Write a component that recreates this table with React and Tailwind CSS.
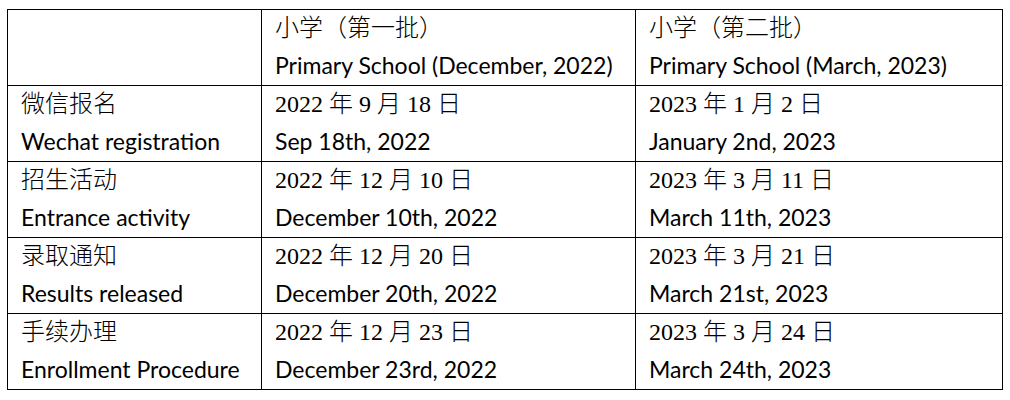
import React from 'react';

const zh = { fontFamily: '"Liberation Serif", "Noto Sans CJK SC", serif' };
const en = { fontFamily: 'Lato, "Liberation Sans", sans-serif' };

const rows = [
    { label: ['微信报名', 'Wechat registration'], a: ['2022 年 9 月 18 日', 'Sep 18th, 2022'], b: ['2023 年 1 月 2 日', 'January 2nd, 2023'] },
    { label: ['招生活动', 'Entrance activity'], a: ['2022 年 12 月 10 日', 'December 10th, 2022'], b: ['2023 年 3 月 11 日', 'March 11th, 2023'] },
    { label: ['录取通知', 'Results released'], a: ['2022 年 12 月 20 日', 'December 20th, 2022'], b: ['2023 年 3 月 21 日', 'March 21st, 2023'] },
    { label: ['手续办理', 'Enrollment Procedure'], a: ['2022 年 12 月 23 日', 'December 23rd, 2022'], b: ['2023 年 3 月 24 日', 'March 24th, 2023'] },
];

const Cell = ({ lines, w }) => (
    <td className={`${w} h-[76px] border border-black align-top pl-[13px] pt-0`}>
        {lines && (
            <div className="flex flex-col text-black">
                <span className="block h-[37px] leading-[37px] text-[24px] font-light" style={zh}>{lines[0]}</span>
                <span className="block h-[37px] leading-[37px] text-[23px]" style={en}>{lines[1]}</span>
            </div>
        )}
    </td>
);

export default function App() {
    return (
        <div className="w-[1010px] h-[400px] bg-white pt-[9px] pl-[7px]">
            <table className="border-collapse w-[995px] table-fixed">
                <tbody>
                    <tr>
                        <Cell w="w-[254px]" />
                        <Cell w="w-[374px]" lines={['小学（第一批）', 'Primary School (December, 2022)']} />
                        <Cell w="w-[367px]" lines={['小学（第二批）', 'Primary School (March, 2023)']} />
                    </tr>
                    {rows.map((r) => (
                        <tr key={r.label[0]}>
                            <Cell w="w-[254px]" lines={r.label} />
                            <Cell w="w-[374px]" lines={r.a} />
                            <Cell w="w-[367px]" lines={r.b} />
                        </tr>
                    ))}
                </tbody>
            </table>
        </div>
    );
}
